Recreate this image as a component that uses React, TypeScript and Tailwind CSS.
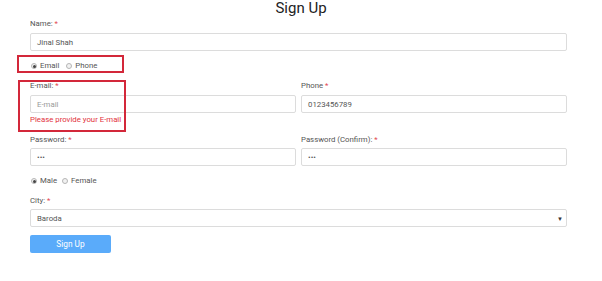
import React from 'react';

const Req = () => <span className="text-[#e2474f]"> *</span>;

function Label({ children, className = '' }: { children: React.ReactNode; className?: string }) {
  return <div className={`h-[10px] pt-[1px] leading-[10px] text-[7.8px] text-[#555] ${className}`}>{children}</div>;
}

function Input({ value, placeholder, className = '' }: { value?: string; placeholder?: string; className?: string }) {
  return (
    <div
      className={`h-[18px] border border-[#dcdcdc] rounded-[2px] bg-white flex items-center px-[6px] pt-[1px] text-[7.8px] ${className}`}
    >
      {value ? <span className="text-[#555]">{value}</span> : <span className="text-[#9a9a9a]">{placeholder}</span>}
    </div>
  );
}

function Radio({ label, checked }: { label: string; checked?: boolean }) {
  return (
    <span className="flex items-center gap-[3px]">
      <span className="w-[6px] h-[6px] rounded-full border border-[#b5b5b5] bg-[#f2f2f2] flex items-center justify-center">
        {checked && <span className="w-[3px] h-[3px] rounded-full bg-[#444]" />}
      </span>
      <span className="text-[7.8px] text-[#555]">{label}</span>
    </span>
  );
}

export default function App() {
  return (
    <div className="relative w-[602px] h-[281px] bg-white overflow-hidden" style={{ fontFamily: 'Roboto, "Open Sans", sans-serif' }}>
      <h1 className="h-[17px] leading-[17px] text-[15px] text-center text-[#222]">Sign Up</h1>

      <div className="pl-[30px] pr-[35px]">
        <Label className="mt-[1px]">Name:<Req /></Label>
        <Input value="Jinal Shah" className="mt-[5px]" />

        <div className="mt-[10px] h-[10px] flex items-center gap-[7px] pl-[1px]">
          <Radio label="Email" checked />
          <Radio label="Phone" />
        </div>

        <div className="mt-[9px] grid grid-cols-2 gap-x-[5px]">
          <div>
            <Label>E-mail:<Req /></Label>
            <Input placeholder="E-mail" className="mt-[5px]" />
            <div className="mt-[1px] pt-[1px] h-[10px] leading-[10px] text-[7.8px] text-[#e2323c]">Please provide your E-mail</div>
          </div>
          <div>
            <Label>Phone<Req /></Label>
            <Input value="0123456789" className="mt-[5px]" />
          </div>
        </div>

        <div className="mt-[10px] grid grid-cols-2 gap-x-[5px]">
          <div>
            <Label>Password:<Req /></Label>
            <Input value="•••" className="mt-[4px]" />
          </div>
          <div>
            <Label>Password (Confirm):<Req /></Label>
            <Input value="•••" className="mt-[4px]" />
          </div>
        </div>

        <div className="mt-[10px] h-[10px] flex items-center gap-[5px] pl-[1px]">
          <Radio label="Male" checked />
          <Radio label="Female" />
        </div>

        <Label className="mt-[9px]">City:<Req /></Label>
        <div className="mt-[4px] h-[18px] border border-[#dcdcdc] rounded-[2px] flex items-center justify-between pl-[6px] pr-[3px] pt-[1px] text-[7.8px] text-[#555]">
          <span>Baroda</span>
          <span className="text-[6px] text-[#333]">▼</span>
        </div>

        <button className="mt-[8px] w-[81px] h-[18px] rounded-[2px] bg-[#5aabfa] text-white text-[8.3px] pt-[1px] flex items-center justify-center">
          Sign Up
        </button>
      </div>

      <div className="absolute left-[17px] top-[55px] w-[107px] h-[18px] border-2 border-[#d3283a]" />
      <div className="absolute left-[18px] top-[80px] w-[108px] h-[52px] border-2 border-[#d3283a]" />
    </div>
  );
}
